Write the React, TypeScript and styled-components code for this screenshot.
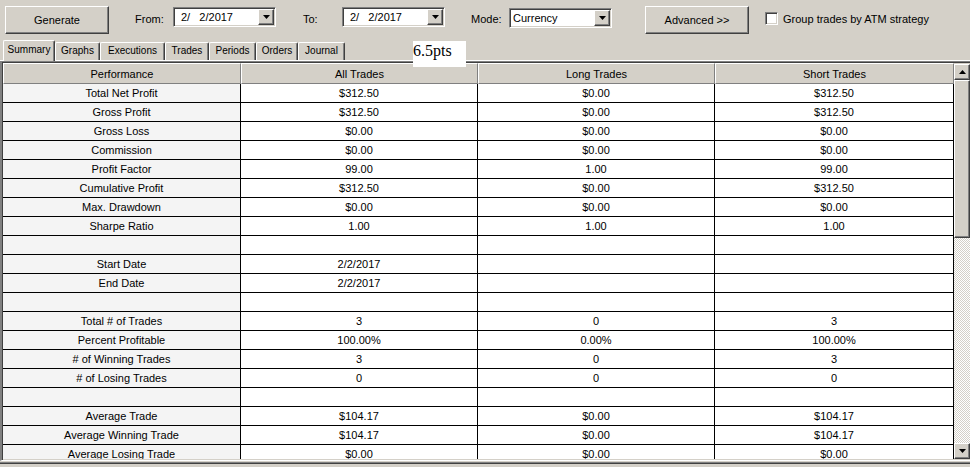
import React from 'react'
import styled, { createGlobalStyle, css } from 'styled-components'

const FACE = '#d4d0c8'
const SHADOW = '#808080'
const DARK = '#404040'

const GlobalStyle = createGlobalStyle`
  html, body {
    margin: 0;
    padding: 0;
    background: ${FACE};
    overflow: hidden;
  }
  body {
    font-family: "Liberation Sans", Arial, sans-serif;
    font-size: 11px;
    color: #000;
  }
`

const raised = css`
  box-sizing: border-box;
  background: ${FACE};
  border: 1px solid;
  border-color: #fff ${DARK} ${DARK} #fff;
  box-shadow: inset -1px -1px ${SHADOW};
`

const sunken = css`
  box-sizing: border-box;
  border: 1px solid;
  border-color: ${SHADOW} #fff #fff ${SHADOW};
  box-shadow: inset 1px 1px ${DARK}, inset -1px -1px ${FACE};
`

const Window = styled.div`
  position: relative;
  width: 970px;
  height: 467px;
  display: flex;
  flex-direction: column;
  overflow: hidden;
`

const Toolbar = styled.div`
  display: flex;
  align-items: flex-start;
  height: 39px;
  padding-top: 6px;
  box-sizing: border-box;
`

const PushButton = styled.button<{ $ml: number }>`
  ${raised};
  margin-left: ${p => p.$ml}px;
  width: 104px;
  height: 28px;
  padding: 0;
  font: inherit;
  color: #000;
`

const FieldLabel = styled.span<{ $ml: number; $w?: number }>`
  margin-left: ${p => p.$ml}px;
  margin-top: 7px;
  width: ${p => (p.$w ? `${p.$w}px` : 'auto')};
  line-height: 13px;
  white-space: nowrap;
`

const Combo = styled.div<{ $mt: number }>`
  ${sunken};
  margin-top: ${p => p.$mt}px;
  width: 103px;
  height: 20px;
  padding: 1px;
  background: #fff;
  display: flex;
`

const ComboValue = styled.span<{ $pad: number }>`
  flex: 1;
  padding-left: ${p => p.$pad}px;
  line-height: 16px;
  white-space: pre;
`

const ArrowButton = styled.span<{ $h?: number }>`
  ${raised};
  width: 16px;
  height: ${p => p.$h ?? 16}px;
  flex: none;
  display: flex;
  align-items: center;
  justify-content: center;
`

const CheckBox = styled.span`
  ${sunken};
  margin-left: 16px;
  margin-top: 6px;
  width: 13px;
  height: 13px;
  background: #fff;
`

const TabStrip = styled.div`
  display: flex;
  align-items: flex-end;
  height: 22px;
  box-sizing: border-box;
  padding-left: 3px;
  border-bottom: 1px solid #fff;
`

const Tab = styled.div<{ $w: number; $active?: boolean }>`
  position: relative;
  box-sizing: border-box;
  width: ${p => p.$w}px;
  height: ${p => (p.$active ? 21 : 18)}px;
  margin-bottom: ${p => (p.$active ? -1 : 0)}px;
  padding-top: ${p => (p.$active ? 1 : 0)}px;
  z-index: ${p => (p.$active ? 1 : 0)};
  background: ${FACE};
  border: 1px solid #fff;
  border-bottom: none;
  border-right-color: ${DARK};
  border-radius: 2px 2px 0 0;
  box-shadow: inset -1px 0 ${SHADOW};
  font-size: 10px;
  line-height: 16px;
  text-align: center;
  white-space: nowrap;
`

const Panel = styled.div`
  display: flex;
  height: 400px;
  box-sizing: border-box;
  border-top: 1px solid ${SHADOW};
  border-left: 2px solid ${SHADOW};
  border-bottom: 1px solid #fff;
  padding: 1px 0 1px 1px;
  box-shadow: inset 1px 1px ${DARK};
`

const Grid = styled.div`
  width: 951px;
  height: 396px;
  overflow: hidden;
  flex: none;
`

const Row = styled.div`
  display: grid;
  grid-template-columns: 238px 237px 237px 239px;
`

const HeadCell = styled.div`
  box-sizing: border-box;
  height: 21px;
  padding-top: 1px;
  line-height: 18px;
  text-align: center;
  background: ${FACE};
  border-top: 1px solid #fff;
  border-left: 1px solid #fff;
  border-right: 1px solid ${SHADOW};
  border-bottom: 1px solid ${SHADOW};
  white-space: nowrap;
`

const Cell = styled.div<{ $label?: boolean }>`
  box-sizing: border-box;
  height: 19px;
  line-height: 18px;
  text-align: center;
  background: ${p => (p.$label ? '#f4f4f4' : '#fff')};
  border-right: 1px solid #000;
  border-bottom: 1px solid #000;
  white-space: nowrap;
  overflow: hidden;
`

const ScrollBar = styled.div`
  width: 16px;
  height: 396px;
  flex: none;
  display: flex;
  flex-direction: column;
  padding-top: 1px;
  box-sizing: border-box;
`

const Thumb = styled.div`
  ${raised};
  height: 158px;
  flex: none;
`

const Track = styled.div`
  flex: 1;
  background: repeating-conic-gradient(#fff 0 25%, ${FACE} 0 50%) 0 0 / 2px 2px;
`

const PageEdge = styled.div`
  margin-top: 1px;
  height: 2px;
  border-top: 1px solid ${SHADOW};
  border-bottom: 1px solid ${DARK};
  box-sizing: border-box;
`

const Note = styled.div`
  position: absolute;
  left: 413px;
  top: 41px;
  width: 53px;
  height: 26px;
  box-sizing: border-box;
  padding-top: 2px;
  background: #fff;
  font-family: "Liberation Serif", "Times New Roman", serif;
  font-size: 16px;
  line-height: 16px;
  z-index: 2;
`

const Arrow = ({ up }: { up?: boolean }) => (
  <svg width="7" height="4" viewBox="0 0 7 4">
    <path d={up ? 'M3.5 0 L7 4 L0 4 Z' : 'M0 0 L7 0 L3.5 4 Z'} fill="#000" />
  </svg>
)

const tabs: [string, number][] = [
  ['Summary', 52],
  ['Graphs', 45],
  ['Executions', 65],
  ['Trades', 44],
  ['Periods', 47],
  ['Orders', 42],
  ['Journal', 47],
]

const header = ['Performance', 'All Trades', 'Long Trades', 'Short Trades']

const rows: string[][] = [
  ['Total Net Profit', '$312.50', '$0.00', '$312.50'],
  ['Gross Profit', '$312.50', '$0.00', '$312.50'],
  ['Gross Loss', '$0.00', '$0.00', '$0.00'],
  ['Commission', '$0.00', '$0.00', '$0.00'],
  ['Profit Factor', '99.00', '1.00', '99.00'],
  ['Cumulative Profit', '$312.50', '$0.00', '$312.50'],
  ['Max. Drawdown', '$0.00', '$0.00', '$0.00'],
  ['Sharpe Ratio', '1.00', '1.00', '1.00'],
  ['', '', '', ''],
  ['Start Date', '2/2/2017', '', ''],
  ['End Date', '2/2/2017', '', ''],
  ['', '', '', ''],
  ['Total # of Trades', '3', '0', '3'],
  ['Percent Profitable', '100.00%', '0.00%', '100.00%'],
  ['# of Winning Trades', '3', '0', '3'],
  ['# of Losing Trades', '0', '0', '0'],
  ['', '', '', ''],
  ['Average Trade', '$104.17', '$0.00', '$104.17'],
  ['Average Winning Trade', '$104.17', '$0.00', '$104.17'],
  ['Average Losing Trade', '$0.00', '$0.00', '$0.00'],
]

const DateCombo = ({ mt }: { mt: number }) => (
  <Combo $mt={mt}>
    <ComboValue $pad={6}>{'2/\u2007 2/2017'}</ComboValue>
    <ArrowButton>
      <Arrow />
    </ArrowButton>
  </Combo>
)

export default function App() {
  return (
    <Window>
      <GlobalStyle />
      <Toolbar>
        <PushButton $ml={5}>Generate</PushButton>
        <FieldLabel $ml={26} $w={38}>From:</FieldLabel>
        <DateCombo mt={1} />
        <FieldLabel $ml={27} $w={39}>To:</FieldLabel>
        <DateCombo mt={1} />
        <FieldLabel $ml={26} $w={38}>Mode:</FieldLabel>
        <Combo $mt={2}>
          <ComboValue $pad={2}>Currency</ComboValue>
          <ArrowButton>
            <Arrow />
          </ArrowButton>
        </Combo>
        <PushButton $ml={33}>Advanced &gt;&gt;</PushButton>
        <CheckBox />
        <FieldLabel $ml={5}>Group trades by ATM strategy</FieldLabel>
      </Toolbar>

      <TabStrip>
        {tabs.map(([name, w], i) => (
          <Tab key={name} $w={w} $active={i === 0}>
            {name}
          </Tab>
        ))}
      </TabStrip>

      <Panel>
        <Grid>
          <Row>
            {header.map(h => (
              <HeadCell key={h}>{h}</HeadCell>
            ))}
          </Row>
          {rows.map((r, i) => (
            <Row key={i}>
              {r.map((v, j) => (
                <Cell key={j} $label={j === 0}>
                  {v}
                </Cell>
              ))}
            </Row>
          ))}
        </Grid>
        <ScrollBar>
          <ArrowButton>
            <Arrow up />
          </ArrowButton>
          <Thumb />
          <Track />
          <ArrowButton>
            <Arrow />
          </ArrowButton>
        </ScrollBar>
      </Panel>
      <PageEdge />

      <Note>6.5pts</Note>
    </Window>
  )
}
